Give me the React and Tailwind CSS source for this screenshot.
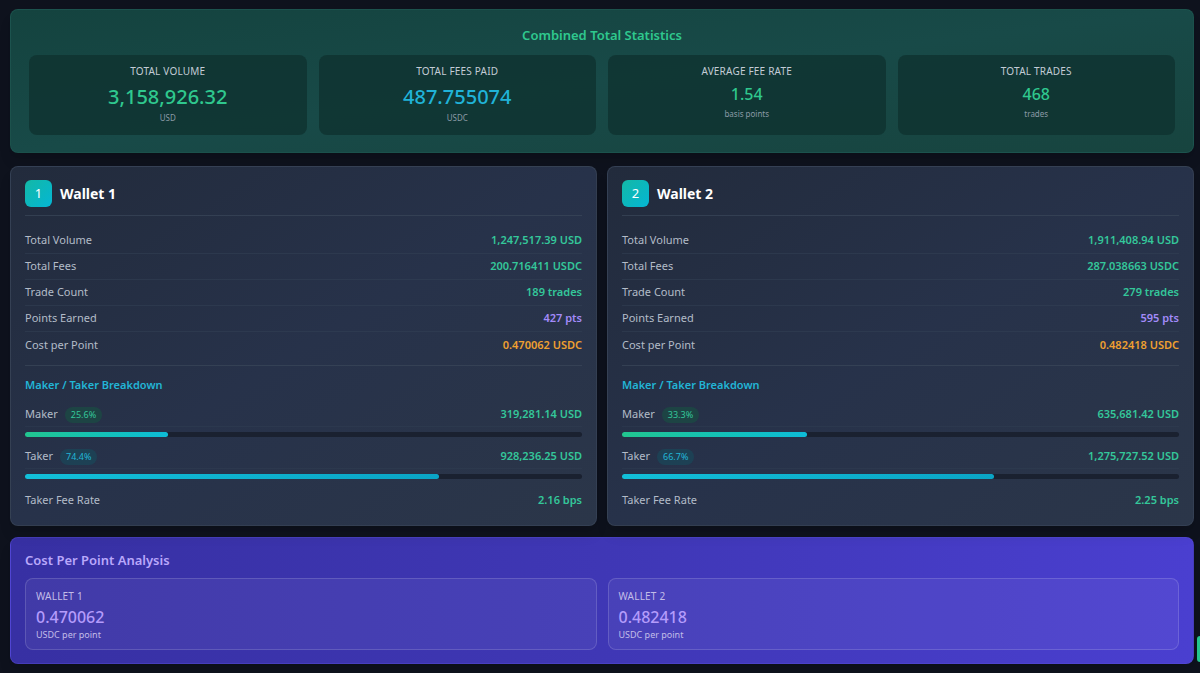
import React from "react";

const font = { fontFamily: '"Noto Sans", "Open Sans", sans-serif' };

function StatBox({ label, value, unit, big, color }) {
  return (
    <div className="h-[80px] rounded-lg bg-[#0f322f]/80 flex flex-col items-center pt-[9px]">
      <div className="text-[10px] leading-[14px] uppercase tracking-[0.2px] text-[#c3ccd6]">{label}</div>
      {big ? (
        <div className={`text-[20px] leading-[28px] mt-[5px] font-medium ${color}`}>{value}</div>
      ) : (
        <div className={`text-[16px] leading-[22px] mt-[5px] font-medium ${color}`}>{value}</div>
      )}
      <div className={`text-[8px] leading-[12px] text-[#8b9aa6] ${big ? "mt-[1px]" : "mt-[3px]"}`}>{unit}</div>
    </div>
  );
}

function Row({ label, value, color, border = true }) {
  return (
    <div className={`h-[26px] flex items-center justify-between ${border ? "border-b border-[#334155]/50" : ""}`}>
      <span className="text-[11px] text-[#b3bcc8]">{label}</span>
      <span className={`text-[11px] font-semibold ${color}`}>{value}</span>
    </div>
  );
}

function Wallet({ n, data }) {
  return (
    <div className="flex-1 rounded-lg border border-[#3a4659]/70 bg-gradient-to-br from-[#222b3c] via-[#27324a] to-[#2b3649] px-[14px] pt-[13px] pb-[12px] shadow-lg">
      <div className="flex items-center gap-[8px] pb-[8px] border-b border-[#3a475a]/70">
        <div className="w-[27px] h-[27px] rounded-md bg-gradient-to-br from-[#14b8a6] to-[#06b6d4] flex items-center justify-center text-white text-[13px]">{n}</div>
        <div className="text-white text-[14px] font-bold">Wallet {n}</div>
      </div>
      <div className="mt-[12px]">
        <Row label="Total Volume" value={data.volume} color="text-[#34c79a]" />
        <Row label="Total Fees" value={data.fees} color="text-[#34c79a]" />
        <Row label="Trade Count" value={data.trades} color="text-[#34c79a]" />
        <Row label="Points Earned" value={data.points} color="text-[#a38bfa]" />
        <Row label="Cost per Point" value={data.cpp} color="text-[#f0a030]" border={false} />
      </div>
      <div className="mt-[7px] border-t border-[#3a475a]/70 pt-[11px]">
        <div className="text-[11px] font-semibold text-[#22b5d6] leading-[16px]">Maker / Taker Breakdown</div>
        <div className="mt-[10px] h-[24px] flex items-center justify-between border-b border-[#334155]/40">
          <div className="flex items-center gap-[7px]">
            <span className="text-[11px] text-[#b3bcc8]">Maker</span>
            <span className="text-[9px] px-[6px] h-[16px] leading-[16px] rounded-full bg-[#1c4a44]/80 text-[#34c79a]">{data.makerPct}%</span>
          </div>
          <span className="text-[11px] font-semibold text-[#34c79a]">{data.maker}</span>
        </div>
        <div className="mt-[5px] h-[5px] rounded-full bg-[#1a2130]">
          <div className="h-full rounded-full bg-gradient-to-r from-[#22c58f] to-[#0ebcd8]" style={{ width: `${data.makerPct}%` }} />
        </div>
        <div className="mt-[8px] h-[24px] flex items-center justify-between border-b border-[#334155]/40">
          <div className="flex items-center gap-[7px]">
            <span className="text-[11px] text-[#b3bcc8]">Taker</span>
            <span className="text-[9px] px-[6px] h-[16px] leading-[16px] rounded-full bg-[#1b4558]/80 text-[#22b5d6]">{data.takerPct}%</span>
          </div>
          <span className="text-[11px] font-semibold text-[#34c79a]">{data.taker}</span>
        </div>
        <div className="mt-[5px] h-[5px] rounded-full bg-[#1a2130]">
          <div className="h-full rounded-full bg-gradient-to-r from-[#12bfd9] to-[#0aa5c6]" style={{ width: `${data.takerPct}%` }} />
        </div>
        <div className="mt-[8px] h-[26px] flex items-center justify-between">
          <span className="text-[11px] text-[#b3bcc8]">Taker Fee Rate</span>
          <span className="text-[11px] font-semibold text-[#34c79a]">{data.rate}</span>
        </div>
      </div>
    </div>
  );
}

function CppBox({ label, value }) {
  return (
    <div className="flex-1 h-[72px] rounded-lg border border-white/15 bg-white/5 px-[10px] pt-[10px]">
      <div className="text-[10px] leading-[14px] uppercase text-[#c2bde8] tracking-[0.2px]">{label}</div>
      <div className="text-[16px] leading-[22px] mt-[3px] font-medium text-[#b49cfb]">{value}</div>
      <div className="text-[9px] leading-[12px] text-[#c2bde8] mt-[1px]">USDC per point</div>
    </div>
  );
}

export default function App() {
  const w1 = {
    volume: "1,247,517.39 USD",
    fees: "200.716411 USDC",
    trades: "189 trades",
    points: "427 pts",
    cpp: "0.470062 USDC",
    makerPct: 25.6,
    maker: "319,281.14 USD",
    takerPct: 74.4,
    taker: "928,236.25 USD",
    rate: "2.16 bps",
  };
  const w2 = {
    volume: "1,911,408.94 USD",
    fees: "287.038663 USDC",
    trades: "279 trades",
    points: "595 pts",
    cpp: "0.482418 USDC",
    makerPct: 33.3,
    maker: "635,681.42 USD",
    takerPct: 66.7,
    taker: "1,275,727.52 USD",
    rate: "2.25 bps",
  };
  return (
    <div style={font} className="relative w-[1200px] h-[673px] overflow-hidden bg-[#0e121d] pl-[10px] pr-[6px] pt-[9px]">
      <div className="rounded-lg border border-[#1f5a54]/60 bg-gradient-to-br from-[#14433f] via-[#184a48] to-[#17443f] px-[18px] pt-[16px] pb-[17px] shadow-lg">
        <div className="text-center text-[13px] font-semibold leading-[18px] text-[#2fc88e]">Combined Total Statistics</div>
        <div className="mt-[11px] grid grid-cols-4 gap-[12px]">
          <StatBox label="Total Volume" value="3,158,926.32" unit="USD" big color="text-[#2fc88e]" />
          <StatBox label="Total Fees Paid" value="487.755074" unit="USDC" big color="text-[#20b3d8]" />
          <StatBox label="Average Fee Rate" value="1.54" unit="basis points" color="text-[#2fc88e]" />
          <StatBox label="Total Trades" value="468" unit="trades" color="text-[#2fc88e]" />
        </div>
      </div>

      <div className="mt-[13px] flex gap-[10px]">
        <Wallet n={1} data={w1} />
        <Wallet n={2} data={w2} />
      </div>

      <div className="mt-[11px] rounded-lg border border-[#5a50d8]/40 bg-gradient-to-r from-[#3730a3] via-[#3f37b5] to-[#4a3fd0] px-[14px] pt-[13px] pb-[13px] shadow-lg">
        <div className="text-[13px] font-semibold leading-[18px] text-[#b9a8fb]">Cost Per Point Analysis</div>
        <div className="mt-[9px] flex gap-[11px]">
          <CppBox label="Wallet 1" value="0.470062" />
          <CppBox label="Wallet 2" value="0.482418" />
        </div>
      </div>

      <div className="absolute right-0 top-[636px] w-[3px] h-[26px] rounded-l bg-[#22c58f]" />
    </div>
  );
}
